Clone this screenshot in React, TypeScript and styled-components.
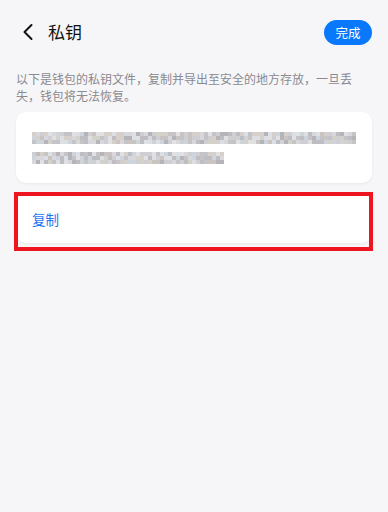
import React from "react";
import styled, { createGlobalStyle } from "styled-components";

const Global = createGlobalStyle`
  html, body { margin: 0; padding: 0; background: #f6f6f8; }
  body { font-family: "Noto Sans CJK SC", "Noto Sans", sans-serif; }
  * { box-sizing: border-box; }
`;

const Page = styled.div`
  width: 388px;
  min-height: 512px;
  background: #f6f6f8;
  display: flex;
  flex-direction: column;
  padding: 0 16px;
`;

const Header = styled.div`
  height: 64px;
  display: flex;
  align-items: center;
  justify-content: space-between;
`;

const TitleGroup = styled.div`
  display: flex;
  align-items: center;
  gap: 14px;
  padding-left: 6px;
`;

const BackIcon = styled.svg`
  width: 12px;
  height: 18px;
  display: block;
`;

const Title = styled.div`
  font-size: 17px;
  color: #111;
  line-height: 20px;
`;

const DoneButton = styled.button`
  width: 48px;
  height: 25px;
  border: none;
  border-radius: 13px;
  background: #0a78fa;
  color: #fff;
  font-family: inherit;
  font-size: 12.5px;
  padding: 0;
`;

const Notice = styled.p`
  margin: 6px 0 0;
  max-width: 342px;
  font-size: 12px;
  line-height: 17px;
  color: #8a8a90;
`;

const Card = styled.div`
  background: #fff;
  border-radius: 10px;
  box-shadow: 0 1px 3px rgba(0, 0, 0, 0.06);
`;

const KeyCard = styled(Card)`
  margin-top: 8px;
  padding: 20px 16px 19px;
  height: 71px;
`;

const Mosaic = styled.svg`
  display: block;
`;

const Highlight = styled.div`
  position: relative;
  margin-top: 11px;
`;

const ActionCard = styled(Card)`
  height: 49px;
  display: flex;
  align-items: center;
  padding: 0 16px;
`;

const ActionText = styled.span`
  font-size: 13.5px;
  color: #1a74f5;
`;

const Frame = styled.div`
  position: absolute;
  top: -2px;
  left: -2px;
  right: -1px;
  bottom: -8px;
  border: 4px solid #ee1521;
  pointer-events: none;
`;

const palette = [
  "#cfcfd3", "#c4c4c8", "#d8d8dc", "#bdbdc2", "#d6d0cb", "#cdd4dc",
  "#e1e1e4", "#b4b4b9", "#c9c4c1", "#dcdfe3",
];

function rng(seed: number) {
  let s = seed;
  return () => {
    s = (s * 9301 + 49297) % 233280;
    return s / 233280;
  };
}

function MosaicBlock() {
  const r = rng(7);
  const lines = [323, 192];
  const rects: React.ReactNode[] = [];
  lines.forEach((w, li) => {
    const y0 = li * 20;
    for (let x = 0; x < w; x += 4) {
      for (let row = 0; row < 3; row++) {
        const c = palette[Math.floor(r() * palette.length)];
        rects.push(
          <rect key={`${li}-${x}-${row}`} x={x} y={y0 + row * 4} width={4} height={4} fill={c} />
        );
      }
    }
  });
  return (
    <Mosaic width={324} height={32} viewBox="0 0 324 32">
      {rects}
    </Mosaic>
  );
}

export default function App() {
  return (
    <>
      <Global />
      <Page>
        <Header>
          <TitleGroup>
            <BackIcon viewBox="0 0 12 18">
              <path d="M9.5 2 L2.5 9 L9.5 16" fill="none" stroke="#111" strokeWidth="2" strokeLinecap="round" strokeLinejoin="round" />
            </BackIcon>
            <Title>私钥</Title>
          </TitleGroup>
          <DoneButton>完成</DoneButton>
        </Header>
        <Notice>以下是钱包的私钥文件，复制并导出至安全的地方存放，一旦丢失，钱包将无法恢复。</Notice>
        <KeyCard>
          <MosaicBlock />
        </KeyCard>
        <Highlight>
          <ActionCard>
            <ActionText>复制</ActionText>
          </ActionCard>
          <Frame />
        </Highlight>
      </Page>
    </>
  );
}
